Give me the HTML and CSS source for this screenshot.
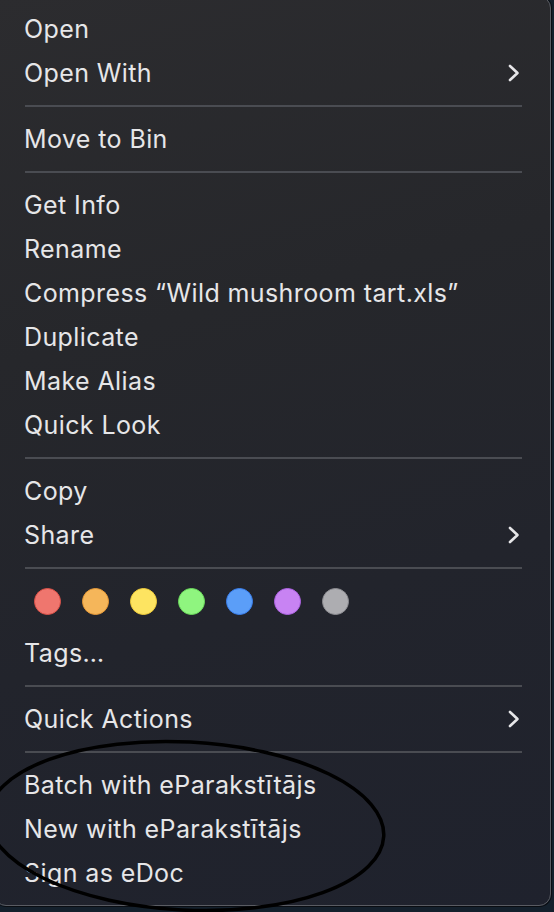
FILE: index.html
```html
<!DOCTYPE html>
<html lang="en">
<head>
  <meta charset="UTF-8">
  <title>Context Menu</title>
  <link rel="stylesheet" href="styles.css">
</head>
<body>

  <!-- Finder context menu -->
  <div class="menu">
    <div class="item">Open</div>
    <div class="item">Open With <span class="chevron"><svg width="12" height="18" viewBox="0 0 12 18"><path d="M2 2 L9.5 9 L2 16" fill="none" stroke="#e6e6e8" stroke-width="2.6" stroke-linecap="round" stroke-linejoin="round"/></svg></span></div>
    <hr class="sep">
    <div class="item">Move to Bin</div>
    <hr class="sep">
    <div class="item">Get Info</div>
    <div class="item">Rename</div>
    <div class="item">Compress “Wild mushroom tart.xls”</div>
    <div class="item">Duplicate</div>
    <div class="item">Make Alias</div>
    <div class="item">Quick Look</div>
    <hr class="sep">
    <div class="item">Copy</div>
    <div class="item">Share <span class="chevron"><svg width="12" height="18" viewBox="0 0 12 18"><path d="M2 2 L9.5 9 L2 16" fill="none" stroke="#e6e6e8" stroke-width="2.6" stroke-linecap="round" stroke-linejoin="round"/></svg></span></div>
    <hr class="sep">
    <div class="tags">
      <span class="dot red"></span>
      <span class="dot orange"></span>
      <span class="dot yellow"></span>
      <span class="dot green"></span>
      <span class="dot blue"></span>
      <span class="dot purple"></span>
      <span class="dot gray"></span>
    </div>
    <div class="item">Tags…</div>
    <hr class="sep">
    <div class="item">Quick Actions <span class="chevron"><svg width="12" height="18" viewBox="0 0 12 18"><path d="M2 2 L9.5 9 L2 16" fill="none" stroke="#e6e6e8" stroke-width="2.6" stroke-linecap="round" stroke-linejoin="round"/></svg></span></div>
    <hr class="sep">
    <div class="item">Batch with eParakstītājs</div>
    <div class="item">New with eParakstītājs</div>
    <div class="item">Sign as eDoc</div>
  </div>

  <!-- hand-drawn circle around the last three items -->
  <svg class="scribble" width="554" height="912" viewBox="0 0 554 912">
    <ellipse cx="186" cy="826" rx="198" ry="84" transform="rotate(3 186 826)" fill="none" stroke="#000" stroke-width="3.5"/>
  </svg>

</body>
</html>
```

FILE: styles.css
```css
body {
  margin: 0;
  padding: 0;
  width: 554px;
  height: 912px;
  overflow: hidden;
  position: relative;
  background: #14202c;
  font-family: Inter, "Noto Sans", sans-serif;
}

.menu {
  box-sizing: border-box;
  width: 557px;
  margin: -4px 0 0 -6px;
  padding: 10px 0;
  background: linear-gradient(165deg, #2c2c2f 0%, #26272b 35%, #22242c 65%, #1f222d 100%);
  border: 1px solid #5a5c63;
  border-radius: 12px;
  box-shadow: 0 0 0 1px #0a0d12;
}

.item {
  height: 44px;
  line-height: 44px;
  padding: 0 30px 0 29px;
  display: flex;
  justify-content: space-between;
  align-items: center;
  color: #e6e6e8;
  font-size: 25px;
  letter-spacing: 0.4px;
  white-space: nowrap;
}

.chevron {
  display: flex;
  align-items: center;
}

.sep {
  height: 2px;
  margin: 10px 28px 10px 30px;
  border: none;
  background: #4a4c52;
}

.tags {
  height: 52px;
  box-sizing: border-box;
  padding: 9px 0 0 39px;
  display: flex;
  gap: 21px;
}

.dot {
  width: 27px;
  height: 27px;
  box-sizing: border-box;
  border-radius: 50%;
  border: 1.5px solid;
}

.red { background: #ef766e; border-color: #dc5148; }
.orange { background: #f5b65a; border-color: #e89a37; }
.yellow { background: #fde461; border-color: #f0cc3a; }
.green { background: #8ff57f; border-color: #6bdc5c; }
.blue { background: #5b9ef8; border-color: #3a7fee; }
.purple { background: #c883f3; border-color: #ad62e3; }
.gray { background: #adadb1; border-color: #8d8d92; }

.scribble {
  position: absolute;
  left: 0;
  top: 0;
}
```
